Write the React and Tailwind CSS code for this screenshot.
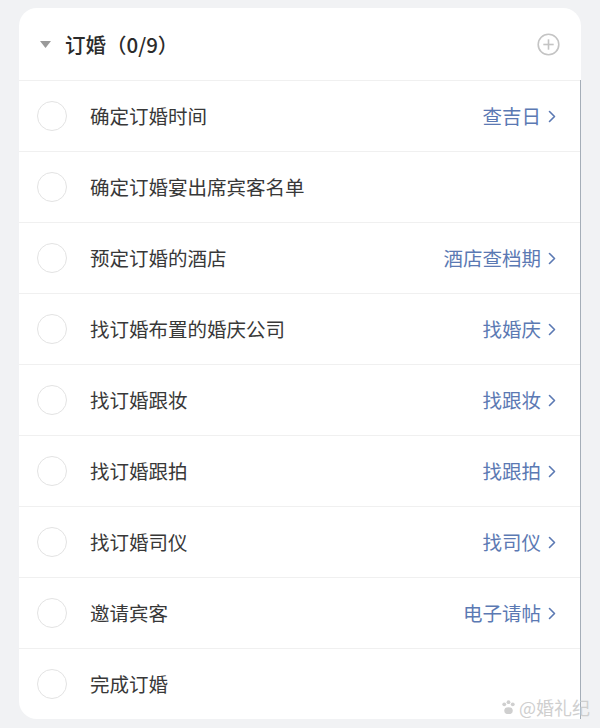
const tasks = [
    { title: '确定订婚时间', link: '查吉日' },
    { title: '确定订婚宴出席宾客名单' },
    { title: '预定订婚的酒店', link: '酒店查档期' },
    { title: '找订婚布置的婚庆公司', link: '找婚庆' },
    { title: '找订婚跟妆', link: '找跟妆' },
    { title: '找订婚跟拍', link: '找跟拍' },
    { title: '找订婚司仪', link: '找司仪' },
    { title: '邀请宾客', link: '电子请帖' },
    { title: '完成订婚' },
];

const Chevron = () => (
    <svg width="8" height="13" viewBox="0 0 8 13" className="ml-[7px]">
        <polyline points="1.5,1.5 6.5,6.5 1.5,11.5" fill="none" stroke="#5b79b3" strokeWidth="1.6" strokeLinecap="round" strokeLinejoin="round" />
    </svg>
);

const App = () => {
    return (
        <div
            className="relative min-h-[728px] overflow-hidden bg-[#f1f2f4] pt-2 pl-[19px] pr-[19px]"
            style={{ fontFamily: '"Noto Sans CJK SC", "Noto Sans", sans-serif' }}
        >
            <div className="bg-white rounded-[18px] rounded-br-none">
                <div className="h-[72px] flex items-center pl-[21px] pr-[21px]">
                    <svg width="11" height="7" viewBox="0 0 11 7">
                        <polygon points="0,0 11,0 5.5,7" fill="#9a9a9a" />
                    </svg>
                    <span className="ml-[14px] text-[20.5px] font-medium text-[#2b2b2b] leading-none">订婚（0/9）</span>
                    <svg width="23" height="23" viewBox="0 0 23 23" className="ml-auto">
                        <circle cx="11.5" cy="11.5" r="10.3" fill="none" stroke="#c4c4c4" strokeWidth="1.6" />
                        <line x1="11.5" y1="6.3" x2="11.5" y2="16.7" stroke="#c4c4c4" strokeWidth="1.6" />
                        <line x1="6.3" y1="11.5" x2="16.7" y2="11.5" stroke="#c4c4c4" strokeWidth="1.6" />
                    </svg>
                </div>
                <div className="border-r border-[#a5aeb8]">
                    {tasks.map((t) => (
                        <div key={t.title} className="h-[71px] flex items-center border-t border-[#f0f0f0] pl-[18px] pr-[24px]">
                            <div className="w-[30px] h-[30px] rounded-full border-[1.5px] border-[#e3e3e3]" />
                            <span className="ml-[23px] text-[19.5px] text-[#383838] leading-none">{t.title}</span>
                            {t.link && (
                                <div className="ml-auto flex items-center text-[19.5px] text-[#5b79b3] leading-none">
                                    {t.link}
                                    <Chevron />
                                </div>
                            )}
                        </div>
                    ))}
                </div>
            </div>
            <div className="absolute right-[10px] bottom-[12px] flex items-center text-[18px] text-[#cfcfcf] leading-none">
                <svg width="17" height="17" viewBox="0 0 16 16" className="mr-[2px]">
                    <circle cx="4" cy="5" r="1.8" fill="#cfcfcf" />
                    <circle cx="8" cy="3" r="1.8" fill="#cfcfcf" />
                    <circle cx="12" cy="5" r="1.8" fill="#cfcfcf" />
                    <ellipse cx="8" cy="11" rx="4" ry="3.2" fill="#cfcfcf" />
                </svg>
                @婚礼纪
            </div>
        </div>
    );
};

export default App;
